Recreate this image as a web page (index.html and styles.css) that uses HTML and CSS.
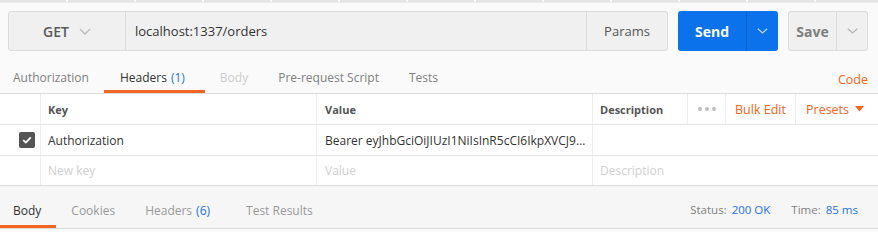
FILE: index.html
```html
<!DOCTYPE html>
<html>
<head>
<meta charset="utf-8">
<link rel="stylesheet" href="styles.css">
</head>
<body>
<div class="app">
  <div class="topstrip"></div>
  <div class="urlrow">
    <div class="urlbox">
      <div class="method">
        <span class="method-text">GET</span>
        <svg class="chev" width="12" height="7" viewBox="0 0 12 7"><path d="M1 1 L6 6 L11 1" fill="none" stroke="#b9b9b9" stroke-width="1.3"/></svg>
      </div>
      <div class="url">localhost:1337/orders</div>
      <div class="params">Params</div>
    </div>
    <div class="send">
      <div class="send-main">Send</div>
      <div class="send-drop"><svg width="11" height="6" viewBox="0 0 11 6"><path d="M0.8 0.8 L5.5 5 L10.2 0.8" fill="none" stroke="#b8d4f8" stroke-width="1.3"/></svg></div>
    </div>
    <div class="save">
      <div class="save-main">Save</div>
      <div class="save-drop"><svg width="11" height="6" viewBox="0 0 11 6"><path d="M0.8 0.8 L5.5 5 L10.2 0.8" fill="none" stroke="#b5b5b5" stroke-width="1.3"/></svg></div>
    </div>
  </div>
  <div class="reqtabs">
    <div class="tab first">Authorization</div>
    <div class="tab active">Headers <span class="count">(1)</span></div>
    <div class="tab disabled">Body</div>
    <div class="tab">Pre-request Script</div>
    <div class="tab">Tests</div>
    <div class="spacer"></div>
    <div class="code">Code</div>
  </div>
  <div class="table">
    <div class="row head">
      <div class="cell chk"></div>
      <div class="cell key">Key</div>
      <div class="cell val">Value</div>
      <div class="cell desc">Description</div>
      <div class="cell dots"><span></span><span></span><span></span></div>
      <div class="cell bulk">Bulk Edit</div>
      <div class="cell presets">Presets <svg width="9" height="6" viewBox="0 0 9 6"><path d="M0 0 H9 L4.5 5.5 Z" fill="#f26522"/></svg></div>
    </div>
    <div class="row">
      <div class="cell chk"><span class="box"><svg width="10" height="8" viewBox="0 0 10 8"><path d="M1.2 4.2 L3.8 6.6 L8.8 1.3" fill="none" stroke="#fff" stroke-width="1.8"/></svg></span></div>
      <div class="cell key">Authorization</div>
      <div class="cell val">Bearer eyJhbGciOiJIUzI1NiIsInR5cCI6IkpXVCJ9…</div>
      <div class="cell desc wide"></div>
    </div>
    <div class="row">
      <div class="cell chk"></div>
      <div class="cell key ph">New key</div>
      <div class="cell val ph">Value</div>
      <div class="cell desc wide ph">Description</div>
    </div>
  </div>
  <div class="resptabs">
    <div class="tab first active">Body</div>
    <div class="tab">Cookies</div>
    <div class="tab wide">Headers <span class="count">(6)</span></div>
    <div class="tab">Test Results</div>
    <div class="spacer"></div>
    <div class="status">Status: <span class="blue">200 OK</span></div>
    <div class="status time">Time: <span class="blue">85 ms</span></div>
  </div>
  <div class="bottomfill"></div>
</div>
</body>
</html>
```

FILE: styles.css
```css
* { box-sizing: border-box; }
html, body { margin: 0; padding: 0; }
body {
  background: #fafafa;
  font-family: "Open Sans", "Liberation Sans", sans-serif;
  font-size: 12px;
  color: #505050;
  width: 878px;
  height: 232px;
  overflow: hidden;
}
.app { display: flex; flex-direction: column; }

.topstrip {
  height: 3px;
  background: repeating-linear-gradient(90deg, #e4e4e4 0, #e4e4e4 66px, #fbfbfb 66px, #fbfbfb 68px);
  border-bottom: 1px solid #ececec;
}

.urlrow {
  display: flex;
  padding: 8px 10px 0 8px;
  height: 48px;
}
.urlbox {
  width: 660px;
  display: flex;
  background: #f0f0f0;
  border: 1px solid #dcdcdc;
  border-radius: 3px;
}
.method {
  width: 117px;
  border-right: 1px solid #dcdcdc;
  display: flex;
  align-items: center;
  justify-content: center;
  gap: 10px;
}
.method-text { font-size: 14px; font-weight: 600; color: #5a5a5a; }
.url {
  flex: 1;
  display: flex;
  align-items: center;
  padding-left: 9px;
  font-size: 13px;
  color: #333;
}
.params {
  width: 81px;
  border-left: 1px solid #dcdcdc;
  display: flex;
  align-items: center;
  justify-content: center;
  font-size: 13px;
  color: #555;
}
.send {
  margin-left: 10px;
  width: 100px;
  display: flex;
  background: #0b72eb;
  border-radius: 3px;
  color: #fff;
}
.send-main {
  width: 69px;
  display: flex; align-items: center; justify-content: center;
  font-size: 14px; font-weight: 700;
  border-right: 1px solid #0a63cc;
}
.send-drop { flex: 1; display: flex; align-items: center; justify-content: center; }
.save {
  margin-left: 10px;
  width: 80px;
  display: flex;
  background: #f0f0f0;
  border: 1px solid #dcdcdc;
  border-radius: 3px;
}
.save-main {
  width: 48px;
  display: flex; align-items: center; justify-content: center;
  font-size: 14px; font-weight: 700; color: #7d7d7d;
  border-right: 1px solid #dcdcdc;
}
.save-drop { flex: 1; display: flex; align-items: center; justify-content: center; }

.reqtabs {
  display: flex;
  height: 43px;
  align-items: stretch;
  border-bottom: 1px solid #dcdcdc;
  padding-right: 10px;
}
.tab {
  display: flex;
  align-items: center;
  padding: 13px 15px 0;
  font-size: 12px;
  color: #808080;
  border-bottom: 3px solid transparent;
}
.tab.first { padding-left: 13px; }
.tab.active { color: #333; border-bottom-color: #f26522; }
.reqtabs .tab.active { padding-left: 16px; padding-right: 20px; }
.tab.disabled { color: #cdcdcd; }
.count { color: #1a73e8; margin-left: 4px; }
.spacer { flex: 1; }
.code {
  display: flex;
  align-items: center;
  padding-top: 14px;
  color: #f26522;
  font-size: 12.5px;
}

.table { background: #fff; }
.row {
  display: flex;
  height: 31px;
  border-bottom: 1px solid #e6e6e6;
}
.row.head { height: 31px; }
.row:last-child { border-bottom: 1px solid #dadada; height: 30px; }
.cell {
  display: flex;
  align-items: center;
  border-right: 1px solid #efefef;
  font-size: 12px;
  color: #333;
  white-space: nowrap;
  overflow: hidden;
}
.chk { width: 41px; justify-content: flex-end; padding-right: 5px; }
.key { width: 276px; padding-left: 7px; }
.val { width: 276px; padding-left: 8px; }
.desc { width: 95px; padding-left: 7px; }
.desc.wide { flex: 1; border-right: none; }
.head .cell { font-size: 11px; font-weight: 700; color: #555; }
.ph { color: #cfcfcf; }
.dots { width: 38px; justify-content: center; gap: 3px; }
.dots span { width: 4px; height: 4px; border-radius: 50%; background: #bdbdbd; }
.head .bulk { width: 70px; justify-content: center; color: #f26522; font-weight: 400; font-size: 12.5px; }
.head .presets { flex: 1; border-right: none; padding-left: 10px; color: #f26522; font-weight: 400; font-size: 12.5px; gap: 6px; }
.box {
  width: 16px; height: 16px;
  background: #555;
  border-radius: 2px;
  display: flex; align-items: center; justify-content: center;
}

.resptabs {
  display: flex;
  height: 43px;
  background: #f6f6f6;
  border-bottom: 1px solid #dcdcdc;
  padding-right: 20px;
}
.resptabs .tab { padding-top: 10px; color: #999; }
.resptabs .tab.active { color: #333; }
.resptabs .tab.first { padding-left: 13px; padding-right: 15px; }
.resptabs .tab.wide { padding-right: 21px; }
.status {
  display: flex;
  align-items: center;
  font-size: 11.5px;
  color: #808080;
  padding-top: 4px;
}
.status .blue { color: #1a73e8; margin-left: 5px; }
.status.time { margin-left: 21px; }
.bottomfill { height: 4px; background: #fafafa; }
```
